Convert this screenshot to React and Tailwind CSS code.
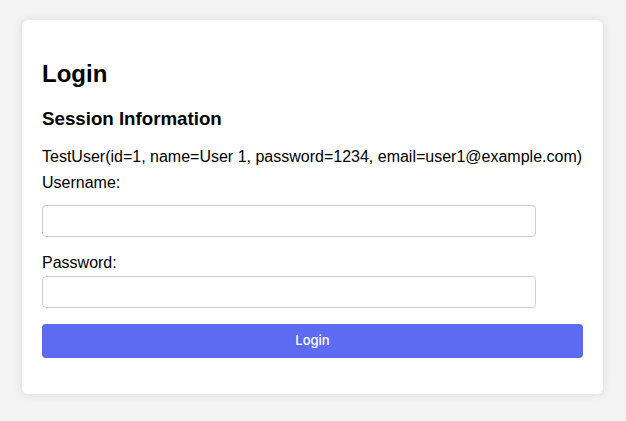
import { useState } from "react";

const App = () => {
  const [formData, setFormData] = useState({ username: "", password: "" });

  // keep the inputs controlled
  const handleInputChange = (e) => {
    setFormData((prevState) => ({ ...prevState, [e.target.id]: e.target.value }));
  };

  return (
    <div className="min-h-[421px] bg-[#f3f3f3] pt-[20px] pl-[22px] font-['Liberation_Sans',Arial,sans-serif] text-black">
      <div className="w-[581px] h-[374px] bg-white rounded-[6px] shadow-[0_0_10px_rgba(0,0,0,0.1)] px-[20px] pt-[20px]">
        <h1 className="mt-[20px] text-[24px] leading-[28px] font-bold">Login</h1>
        <h3 className="mt-[20px] text-[18.72px] leading-[21.5px] font-bold">
          Session Information
        </h3>
        <p className="mt-[18px] text-[16px] leading-[18.5px]">
          TestUser(id=1, name=User 1, password=1234, email=user1@example.com)
        </p>
        <form onSubmit={(e) => e.preventDefault()}>
          <label htmlFor="username" className="block mt-[8px] text-[16px] leading-[18px]">
            Username:
          </label>
          <input
            id="username"
            type="text"
            value={formData.username}
            onChange={handleInputChange}
            className="block mt-[13px] w-[494px] h-[32px] px-[8px] border border-[#cccccc] rounded-[4px] outline-none"
          />
          <label htmlFor="password" className="block mt-[17px] text-[16px] leading-[18px]">
            Password:
          </label>
          <input
            id="password"
            type="password"
            value={formData.password}
            onChange={handleInputChange}
            className="block mt-[4px] w-[494px] h-[32px] px-[8px] border border-[#cccccc] rounded-[4px] outline-none"
          />
          <button
            type="submit"
            className="block mt-[16px] w-full h-[34px] bg-[#5d6bf3] text-white text-[13px] rounded-[4px] font-['Inter',sans-serif] font-medium"
          >
            Login
          </button>
        </form>
      </div>
    </div>
  );
};

export default App;
